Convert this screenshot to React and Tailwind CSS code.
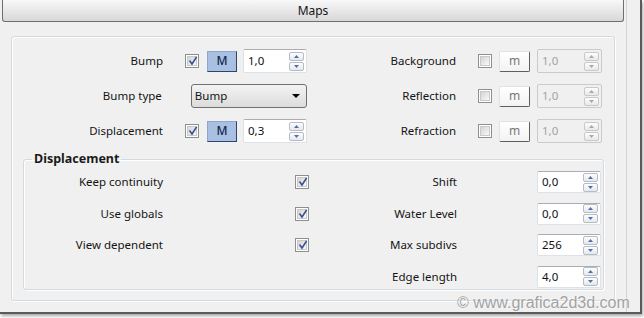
import React from "react";

function Check({ checked = true }) {
  return (
    <span className="flex h-[14px] w-[14px] shrink-0 items-center justify-center border border-[#8e8f8f] bg-white">
      <span className="relative flex h-[10px] w-[10px] items-center justify-center border border-[#c9c9c9] bg-gradient-to-br from-[#d4d4d4] to-[#f9f9f9]">
        {checked && (
          <svg width="10" height="10" viewBox="0 0 10 10" className="absolute left-[0px] top-[-1px]">
            <path d="M2 5.2 L4 8 L8.2 1.5" stroke="#3a4f95" strokeWidth="1.6" fill="none" strokeLinecap="square" />
          </svg>
        )}
      </span>
    </span>
  );
}

function Arrow({ up, disabled }) {
  const c = disabled ? "#a8a8a8" : "#4d6fad";
  return (
    <span
      className={`flex h-[9px] w-[15px] items-center justify-center rounded-[2px] border ${
        disabled ? "border-[#c9c9c9]" : "border-[#b3bcc9]"
      } bg-gradient-to-b from-[#fdfdfd] to-[#e8e8e8]`}
    >
      <svg width="5" height="3" viewBox="0 0 5 3">
        {up ? <path d="M0 3 L2.5 0 L5 3 Z" fill={c} /> : <path d="M0 0 L2.5 3 L5 0 Z" fill={c} />}
      </svg>
    </span>
  );
}

function Spin({ value, disabled, h = "h-[24px]", w = "w-[64px]" }) {
  return (
    <div
      className={`flex ${h} ${w} shrink-0 items-center justify-between rounded-[2px] border pl-[4px] pr-[2px] ${
        disabled
          ? "border-[#cacaca] bg-[#f0f0f0] text-[#a3a3a3]"
          : "border-[#dde2e8] border-t-[#abadb3] bg-white text-[#111]"
      }`}
    >
      <span>{value}</span>
      <span className="flex flex-col gap-[1px]">
        <Arrow up disabled={disabled} />
        <Arrow disabled={disabled} />
      </span>
    </div>
  );
}

function MBtn() {
  return (
    <span className="flex h-[21px] w-[30px] shrink-0 items-center justify-center border border-[#8ea6c9] border-r-[#2f4468] border-b-[#2f4468] bg-[#a8c0e2] text-[12px] font-medium text-[#14264a]">
      M
    </span>
  );
}

function SmallM() {
  return (
    <span className="flex h-[21px] w-[31px] shrink-0 items-center justify-center rounded-[2px] border border-[#e2e2e2] border-r-[#5e5e5e] border-b-[#5e5e5e] bg-gradient-to-b from-white to-[#f3f3f3] text-[12px] text-[#777]">
      m
    </span>
  );
}

function LeftRow({ label, value }) {
  return (
    <div className="flex h-[24px] items-center">
      <span className="w-[151px] text-right">{label}</span>
      <span className="ml-[22px]">
        <Check />
      </span>
      <span className="ml-[8px]">
        <MBtn />
      </span>
      <span className="ml-[6px]">
        <Spin value={value} />
      </span>
    </div>
  );
}

function RightRow({ label }) {
  return (
    <div className="flex h-[24px] items-center">
      <span className="w-[149px] text-right">{label}</span>
      <span className="ml-[22px]">
        <Check checked={false} />
      </span>
      <span className="ml-[7px]">
        <SmallM />
      </span>
      <span className="ml-[7px]">
        <Spin value="1,0" disabled w="w-[65px]" />
      </span>
    </div>
  );
}

function DispRow({ left, right, value }) {
  return (
    <div className="flex h-[22px] items-center">
      {left ? (
        <>
          <span className="w-[139px] text-right">{left}</span>
          <span className="ml-[132px]">
            <Check />
          </span>
        </>
      ) : (
        <span className="w-[285px]" />
      )}
      <span className="w-[148px] text-right">{right}</span>
      <span className="ml-[80px]">
        <Spin value={value} h="h-[22px]" />
      </span>
    </div>
  );
}

export default function App() {
  return (
    <div className="relative h-[318px] w-[644px] overflow-hidden bg-white font-['Noto_Sans',sans-serif] text-[11.5px] text-[#141414]">
      <div className="flex h-[314px] w-[642px] border-r-2 border-b-2 border-[#5a5a5a] bg-[#f0f0f0] shadow-[1px_2px_3px_rgba(0,0,0,0.35)]">
        <div className="flex w-[627px] flex-col border-r border-[#d4d4d4]">
          <div className="ml-[2px] flex h-[22px] w-[622px] items-center justify-center rounded-b-[3px] border-x border-b border-[#6f6f6f] bg-gradient-to-b from-[#f8f8f8] to-[#d8d8d8] text-[12px]">
            Maps
          </div>

          <div className="ml-[11px] mt-[14px] h-[265px] w-[604px] rounded-[3px] border border-[#d3dbe2] pt-[12px] shadow-[inset_1px_1px_0_#ffffff,1px_1px_0_#ffffff]">
            <div className="flex">
              <div className="flex w-[295px] flex-col">
                <LeftRow label="Bump" value="1,0" />
                <div className="mt-[11px] flex h-[24px] items-center">
                  <span className="w-[151px] text-right">Bump type</span>
                  <div className="ml-[29px] flex h-[24px] w-[117px] items-center justify-between rounded-[3px] border border-[#707070] bg-gradient-to-b from-[#f3f3f3] to-[#dcdcdc] pl-[3px] pr-[6px]">
                    <span>Bump</span>
                    <svg width="8" height="4" viewBox="0 0 8 4">
                      <path d="M0 0 L8 0 L4 4 Z" fill="#000" />
                    </svg>
                  </div>
                </div>
                <div className="mt-[11px]">
                  <LeftRow label="Displacement" value="0,3" />
                </div>
              </div>
              <div className="flex flex-col">
                <RightRow label="Background" />
                <div className="mt-[11px]">
                  <RightRow label="Reflection" />
                </div>
                <div className="mt-[11px]">
                  <RightRow label="Refraction" />
                </div>
              </div>
            </div>

            <fieldset className="ml-[11px] mt-[8px] h-[139px] w-[581px] rounded-[3px] border border-[#d3dbe2] shadow-[inset_1px_1px_0_#ffffff,1px_1px_0_#ffffff]">
              <legend className="ml-[8px] px-[2px] text-[12.5px] font-bold leading-[16px] text-[#1a1a1a]">
                Displacement
              </legend>
              <div className="mt-[4px] flex flex-col gap-[9.5px]">
                <DispRow left="Keep continuity" right="Shift" value="0,0" />
                <DispRow left="Use globals" right="Water Level" value="0,0" />
                <DispRow left="View dependent" right="Max subdivs" value="256" />
                <DispRow right="Edge length" value="4,0" />
              </div>
            </fieldset>
          </div>
        </div>
        <div className="flex-1" />
      </div>

      <div className="absolute left-[457px] top-[293px] font-['Liberation_Sans',Arial,sans-serif] text-[16px] leading-[20px] text-[#a2a2a2] [text-shadow:0_0_2px_#ffffff]">
        © www.grafica2d3d.com
      </div>
    </div>
  );
}
